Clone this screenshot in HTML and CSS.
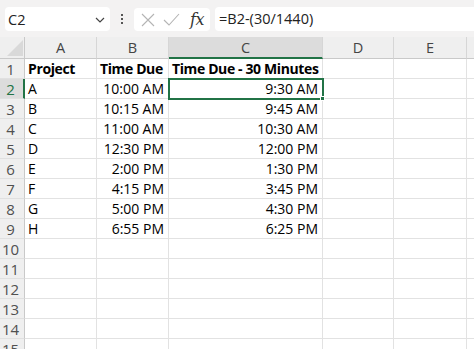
FILE: index.html
```html
<!DOCTYPE html>
<html>
<head>
<meta charset="utf-8">
<link rel="stylesheet" href="styles.css">
</head>
<body>
<div class="app">
  <div class="toolbar">
    <div class="namebox">
      <span class="ref">C2</span>
      <svg class="chev" width="10" height="6" viewBox="0 0 10 6"><path d="M1 1 L5 5 L9 1" fill="none" stroke="#444" stroke-width="1.2"/></svg>
    </div>
    <div class="dots"><i></i><i></i><i></i></div>
    <div class="fxbox">
      <svg class="ico" width="14" height="14" viewBox="0 0 14 14"><path d="M1 1 L13 13 M13 1 L1 13" stroke="#b4b4b4" stroke-width="1.1" fill="none"/></svg>
      <svg class="ico" width="17" height="13" viewBox="0 0 17 13"><path d="M1 7 L6 12 L16 1" stroke="#b4b4b4" stroke-width="1.1" fill="none"/></svg>
      <span class="fx">fx</span>
    </div>
    <div class="formula">=B2-(30/1440)</div>
  </div>
  <div class="sheet">
    <div class="corner"><svg width="16" height="16" viewBox="0 0 16 16"><path d="M16 0 L16 16 L0 16 Z" fill="#d9d9d9"/></svg></div>
    <div class="ch">A</div><div class="ch">B</div><div class="ch sel">C</div><div class="ch">D</div><div class="ch">E</div><div class="ch last"></div>

    <div class="rh">1</div><div class="c b">Project</div><div class="c b">Time Due</div><div class="c b">Time Due - 30 Minutes</div><div class="c"></div><div class="c"></div><div class="c last"></div>
    <div class="rh rsel">2</div><div class="c">A</div><div class="c r">10:00 AM</div><div class="c r active">9:30 AM<span class="handle"></span></div><div class="c"></div><div class="c"></div><div class="c last"></div>
    <div class="rh">3</div><div class="c">B</div><div class="c r">10:15 AM</div><div class="c r">9:45 AM</div><div class="c"></div><div class="c"></div><div class="c last"></div>
    <div class="rh">4</div><div class="c">C</div><div class="c r">11:00 AM</div><div class="c r">10:30 AM</div><div class="c"></div><div class="c"></div><div class="c last"></div>
    <div class="rh">5</div><div class="c">D</div><div class="c r">12:30 PM</div><div class="c r">12:00 PM</div><div class="c"></div><div class="c"></div><div class="c last"></div>
    <div class="rh">6</div><div class="c">E</div><div class="c r">2:00 PM</div><div class="c r">1:30 PM</div><div class="c"></div><div class="c"></div><div class="c last"></div>
    <div class="rh">7</div><div class="c">F</div><div class="c r">4:15 PM</div><div class="c r">3:45 PM</div><div class="c"></div><div class="c"></div><div class="c last"></div>
    <div class="rh">8</div><div class="c">G</div><div class="c r">5:00 PM</div><div class="c r">4:30 PM</div><div class="c"></div><div class="c"></div><div class="c last"></div>
    <div class="rh">9</div><div class="c">H</div><div class="c r">6:55 PM</div><div class="c r">6:25 PM</div><div class="c"></div><div class="c"></div><div class="c last"></div>
    <div class="rh">10</div><div class="c"></div><div class="c"></div><div class="c"></div><div class="c"></div><div class="c"></div><div class="c last"></div>
    <div class="rh">11</div><div class="c"></div><div class="c"></div><div class="c"></div><div class="c"></div><div class="c"></div><div class="c last"></div>
    <div class="rh">12</div><div class="c"></div><div class="c"></div><div class="c"></div><div class="c"></div><div class="c"></div><div class="c last"></div>
    <div class="rh">13</div><div class="c"></div><div class="c"></div><div class="c"></div><div class="c"></div><div class="c"></div><div class="c last"></div>
    <div class="rh">14</div><div class="c"></div><div class="c"></div><div class="c"></div><div class="c"></div><div class="c"></div><div class="c last"></div>
    <div class="rh">15</div><div class="c"></div><div class="c"></div><div class="c"></div><div class="c"></div><div class="c"></div><div class="c last"></div>
  </div>
</div>
</body>
</html>
```
FILE: styles.css
```css
* { box-sizing: border-box; }
html, body { margin: 0; padding: 0; }
body {
  width: 474px;
  height: 349px;
  overflow: hidden;
  background: #fff;
  font-family: "Open Sans", "Noto Sans", sans-serif;
  color: #000;
}
.toolbar {
  height: 37px;
  background: #f3f2f2;
  display: flex;
  align-items: flex-start;
  padding: 7px 0 0 5px;
}
.namebox {
  width: 105px;
  height: 24px;
  background: #fff;
  border-radius: 4px;
  display: flex;
  align-items: center;
  justify-content: space-between;
  padding: 0 5px 0 3px;
  font-size: 14.5px;
  color: #222;
}
.chev { margin-top: 1px; }
.dots {
  width: 24px;
  height: 24px;
  display: flex;
  flex-direction: column;
  align-items: center;
  justify-content: center;
  gap: 2px;
}
.dots i {
  display: block;
  width: 2px;
  height: 2px;
  background: #555;
}
.fxbox {
  width: 76px;
  height: 23px;
  background: #fff;
  border-radius: 4px;
  display: flex;
  align-items: center;
  padding-left: 7px;
  gap: 8px;
  margin-top: 1px;
}
.fx {
  font-family: "DejaVu Serif", "Liberation Serif", serif;
  font-style: italic;
  font-size: 16px;
  color: #333;
  margin-left: 2px;
  letter-spacing: -0.5px;
}
.formula {
  flex: 1;
  height: 24px;
  margin-left: 5px;
  background: #fff;
  border-radius: 4px 0 0 4px;
  font-size: 14.5px;
  line-height: 24px;
  padding-left: 4px;
  color: #222;
}
.sheet {
  display: grid;
  grid-template-columns: 25px 72px 72px 154px 71px 73px 1fr;
  grid-template-rows: 22px;
  grid-auto-rows: 20px;
}
.corner {
  background: #efefef;
  border-bottom: 1px solid #c9c9c9;
  border-right: 1px solid #c9c9c9;
  display: flex;
  align-items: flex-end;
  justify-content: flex-end;
  padding: 0 1px 2px 0;
}
.ch {
  background: #efefef;
  border-right: 1px solid #d6d6d6;
  border-bottom: 1px solid #c9c9c9;
  text-align: center;
  font-size: 14.5px;
  line-height: 21px;
  color: #444;
}
.ch.sel {
  background: #dcdcdc;
  border-bottom: 2px solid #217346;
  color: #444;
}
.ch.last, .c.last { border-right: none; }
.rh {
  background: #efefef;
  border-right: 1px solid #c9c9c9;
  border-bottom: 1px solid #e0e0e0;
  font-size: 15px;
  line-height: 20px;
  text-align: center;
  padding-right: 3px;
  color: #505050;
}
.rh.rsel {
  background: #dcdcdc;
  border-right: 2px solid #217346;
  padding-right: 2px;
  color: #217346;
}
.c {
  border-right: 1px solid #e2e2e2;
  border-bottom: 1px solid #e2e2e2;
  font-size: 14px;
  line-height: 20px;
  padding: 0 4px 0 3px;
  white-space: nowrap;
  overflow: visible;
}
.c.b { font-weight: 700; letter-spacing: -0.38px; }
.c.r { text-align: right; }
.c.active {
  position: relative;
  outline: 2px solid #217346;
  outline-offset: -1px;
}
.handle {
  position: absolute;
  right: -3px;
  bottom: -3px;
  width: 5px;
  height: 5px;
  background: #217346;
  border: 1px solid #fff;
}
```
